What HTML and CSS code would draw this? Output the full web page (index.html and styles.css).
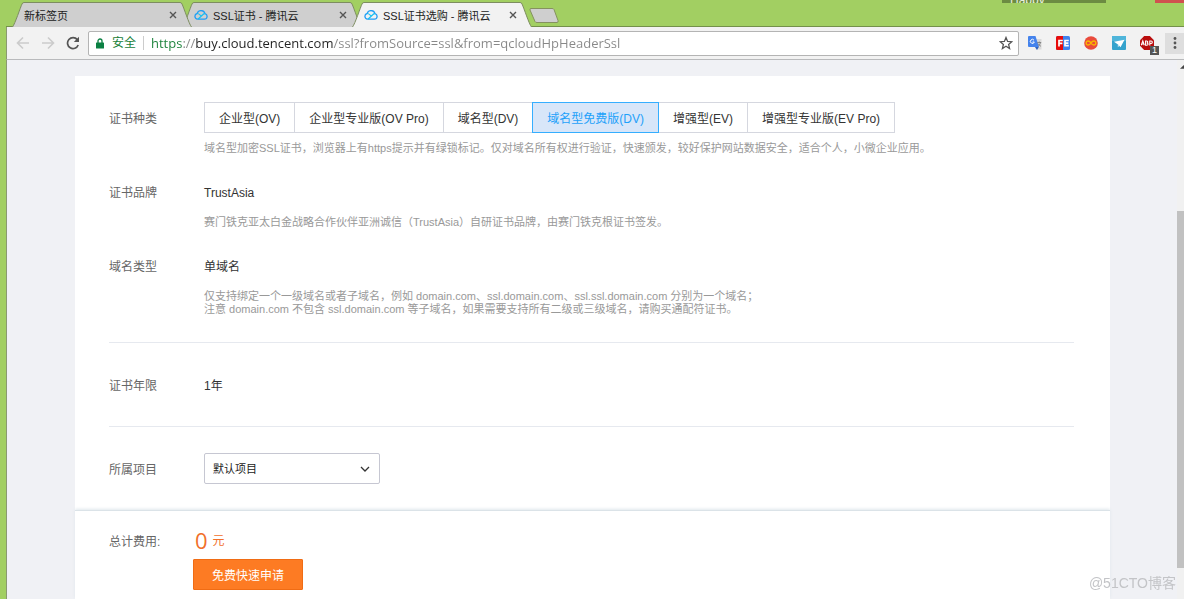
FILE: index.html
```html
<!DOCTYPE html>
<html lang="zh-CN">
<head>
<meta charset="utf-8">
<meta name="viewport" content="width=device-width, initial-scale=1">
<title>SSL证书选购 - 腾讯云</title>
<link rel="stylesheet" href="styles.css">
</head>
<body>
<svg class="sprites" aria-hidden="true">
  <symbol id="close" viewBox="0 0 8 8"><path d="M1 1l6 6M7 1L1 7" fill="none" stroke="#555" stroke-width="1.4"/></symbol>
  <symbol id="cloud" viewBox="0 0 14 10">
    <path d="M3.600 9.200H10.400a2.800 2.800 0 0 0 .6-5.500 4.100 4.100 0 0 0-7.900-.2A2.900 2.900 0 0 0 3.600 9.200" fill="none" stroke="#219df5" stroke-width="1.300"/>
    <path d="M4.200 9l4.800-4.500a2.300 2.300 0 0 1 2-.8M3.100 3.500c1.600-.2 2.600.8 3.900 2.300" fill="none" stroke="#14c1f2" stroke-width="1.200"/>
  </symbol>
  <symbol id="tab-shape" viewBox="0 0 180 25" preserveAspectRatio="none">
    <path d="M.5 25C3 22 8.500 5 10 2Q10.500.5 12 .5H168Q169.500.5 170 2C172 6 177 22 179.500 25" stroke="#7d8d60" stroke-width="1"/>
  </symbol>
</svg>

<div class="window">
  <header class="tabstrip">
    <nav class="tabs" aria-label="标签页">
      <div class="tab tab-first">
        <svg class="tab-bg"><use href="#tab-shape"/></svg>
        <button class="tab-title">新标签页</button>
        <button class="tab-close" aria-label="关闭"><svg><use href="#close"/></svg></button>
      </div>
      <div class="tab">
        <svg class="tab-bg"><use href="#tab-shape"/></svg>
        <svg class="tab-icon"><use href="#cloud"/></svg>
        <button class="tab-title">SSL证书 - 腾讯云</button>
        <button class="tab-close" aria-label="关闭"><svg><use href="#close"/></svg></button>
      </div>
      <div class="tab tab-active">
        <svg class="tab-bg"><use href="#tab-shape"/></svg>
        <svg class="tab-icon"><use href="#cloud"/></svg>
        <button class="tab-title">SSL证书选购 - 腾讯云</button>
        <button class="tab-close" aria-label="关闭"><svg><use href="#close"/></svg></button>
      </div>
      <button class="new-tab" aria-label="新建标签页"><svg viewBox="0 0 30 15"><path d="M2 .5H23q1.500 0 2 1L29 12.500q.6 2-1 2H8q-1.500 0-2-1L1 2Q.5.5 2 .5z" fill="#cfcfcf" stroke="#85925f"/></svg></button>
    </nav>
    <div class="user-badge">Happy</div>
    <button class="window-close" aria-label="关闭窗口"></button>
  </header>

  <div class="toolbar">
    <button class="nav-btn" aria-label="后退"><svg viewBox="0 0 14 14"><path d="M13 7H2M7 1.500L1.500 7L7 12.500" fill="none" stroke="#cbcbcb" stroke-width="1.600"/></svg></button>
    <button class="nav-btn" aria-label="前进"><svg viewBox="0 0 14 14"><path d="M1 7h11M7 1.500L12.500 7L7 12.500" fill="none" stroke="#cbcbcb" stroke-width="1.600"/></svg></button>
    <button class="nav-btn reload" aria-label="刷新"><svg viewBox="0 0 14 14"><path d="M12.200 9A5.500 5.500 0 1 1 11.300 3.600" fill="none" stroke="#555" stroke-width="1.700"/><path d="M13 .8V6H7.800z" fill="#555"/></svg></button>
    <div class="address">
      <svg class="lock" viewBox="0 0 8 11"><path d="M2 5V3a2 2 0 0 1 4 0v2" fill="none" stroke="#0b8043" stroke-width="1.300"/><rect y="4.500" width="8" height="6" rx=".6" fill="#0b8043"/></svg>
      <label class="secure" for="url">安全</label>
      <input class="url" id="url" type="text" spellcheck="false" value="https://buy.cloud.tencent.com/ssl?fromSource=ssl&amp;from=qcloudHpHeaderSsl">
      <button class="star" aria-label="收藏"><svg viewBox="0 0 14 14"><path d="M7 1.500l1.600 3.900 4.200.3-3.200 2.700 1 4.100L7 10.300l-3.600 2.200 1-4.100L1.200 5.700l4.200-.3z" fill="none" stroke="#555" stroke-width="1.300"/></svg></button>
    </div>
    <div class="extensions">
      <button class="ext" aria-label="翻译"><svg viewBox="0 0 14 14"><path d="M5 3h8.500v10.500H8z" fill="#dadada"/><path d="M0 1q0-1 1-1h6.500L11 11H1q-1 0-1-1z" fill="#4583ec"/><path d="M7 11h3.800L9 14z" fill="#3162bd"/><path d="M6 4.200A2 2 0 1 0 6.300 6H4.500" fill="none" stroke="#fff"/><path d="M9.200 6.500h4M11.300 5.500v1M12.500 6.500Q12 9 10.300 10M10 7.500q1 2 3 2.800" fill="none" stroke="#777" stroke-width=".8"/></svg></button>
      <button class="ext" aria-label="FE助手"><svg viewBox="0 0 14 14"><rect width="14" height="14" rx="1.500" fill="#3f83ee"/><path d="M1.500 0H7v14H1.500Q0 14 0 12.500v-11Q0 0 1.500 0z" fill="#e80b0b"/><path d="M3 10.500V4.500h3.800M3 7.300h3.400M12.800 4.500H9v5.200h3.800M9 7.100h3.400" fill="none" stroke="#fff" stroke-width="1.700"/></svg></button>
      <button class="ext" aria-label="无限"><svg viewBox="0 0 14 14"><circle cx="7" cy="7" r="6.800" fill="#e94b3c"/><path d="M7 7C5.500 4.500 2.200 4.300 2.200 7S5.500 9.500 7 7s4.800-2.700 4.800 0S8.500 9.500 7 7z" fill="none" stroke="#f8b500" stroke-width="1.400"/></svg></button>
      <button class="ext" aria-label="发送"><svg viewBox="0 0 14 14"><rect width="14" height="14" rx="1" fill="#35a3cd"/><path d="M0 0h14v5H0z" fill="#4fb5da"/><path d="M2 5.800L12.500 3.800 8.500 11.200 6 8.600z" fill="#fff"/><path d="M5.800 8.400v2.800l1.500-1.400z" fill="#cfe9f4"/></svg></button>
      <button class="ext" aria-label="ABP"><svg viewBox="0 0 14 14"><path d="M4.200 0h5.600L14 4.200v5.600L9.800 14H4.200L0 9.800V4.200z" fill="#b90d0d"/><path d="M1.300 9.300L2.800 4.900l1.500 4.400M1.800 8h2M5.600 5v4.200h1.200q1.300 0 1.300-1.200 0-1-1.300-1 1 0 1-1t-1-1zM9.800 9.500V5h1.300q1.200 0 1.200 1.200t-1.200 1.300H9.800" fill="none" stroke="#fff" stroke-width="1.100"/></svg><span class="count">1</span></button>
    </div>
    <button class="menu" aria-label="菜单"><svg viewBox="0 0 4 14"><circle cx="2" cy="2.500" r="1.400" fill="#555"/><circle cx="2" cy="7" r="1.400" fill="#555"/><circle cx="2" cy="11.500" r="1.400" fill="#555"/></svg></button>
  </div>

  <div class="viewport">
    <main class="page">
      <form class="order">
        <section class="group">
          <div class="row">
            <span class="label">证书种类</span>
            <div class="field">
              <div class="types">
                <button type="button" class="type">企业型(OV)</button>
                <button type="button" class="type">企业型专业版(OV Pro)</button>
                <button type="button" class="type">域名型(DV)</button>
                <button type="button" class="type type-active">域名型免费版(DV)</button>
                <button type="button" class="type">增强型(EV)</button>
                <button type="button" class="type">增强型专业版(EV Pro)</button>
              </div>
              <p class="hint">域名型加密SSL证书，浏览器上有https提示并有绿锁标记。仅对域名所有权进行验证，快速颁发，较好保护网站数据安全，适合个人，小微企业应用。</p>
            </div>
          </div>
          <div class="row">
            <span class="label">证书品牌</span>
            <div class="field">
              <div class="value">TrustAsia</div>
              <p class="hint">赛门铁克亚太白金战略合作伙伴亚洲诚信（TrustAsia）自研证书品牌，由赛门铁克根证书签发。</p>
            </div>
          </div>
          <div class="row">
            <span class="label">域名类型</span>
            <div class="field">
              <div class="value">单域名</div>
              <p class="hint">仅支持绑定一个一级域名或者子域名，例如 domain.com、ssl.domain.com、ssl.ssl.domain.com 分别为一个域名；<br>注意 domain.com 不包含 ssl.domain.com 等子域名，如果需要支持所有二级或三级域名，请购买通配符证书。</p>
            </div>
          </div>
        </section>
        <section class="group">
          <div class="row">
            <span class="label">证书年限</span>
            <div class="value">1年</div>
          </div>
        </section>
        <section class="group">
          <div class="row">
            <label class="label" for="project">所属项目</label>
            <div class="select">
              <select id="project"><option>默认项目</option></select>
              <svg class="chevron" viewBox="0 0 10 6"><path d="M1 1l4 4 4-4" fill="none" stroke="#333" stroke-width="1.300"/></svg>
            </div>
          </div>
        </section>
      </form>
      <section class="checkout">
        <span class="label">总计费用:</span>
        <div class="total">
          <div class="price"><strong class="amount">0</strong><span>元</span></div>
          <button class="apply">免费快速申请</button>
        </div>
      </section>
    </main>
    <div class="scrollbar">
      <svg class="scroll-up" viewBox="0 0 7 5"><path d="M0 5L5 0h2v5z" fill="#444"/></svg>
      <div class="thumb"></div>
    </div>
  </div>
</div>
<div class="watermark">@51CTO博客</div>
</body>
</html>
```
FILE: styles.css
```css
* {
  box-sizing: border-box;
}

body {
  margin: 0;
  background: #a2cf62;
  color: #333;
  font: 12px "Liberation Sans", "Noto Sans CJK SC", sans-serif;
}

button {
  margin: 0;
  padding: 0;
  border: 0;
  background: none;
  color: inherit;
  font: inherit;
}

svg {
  display: block;
}

.sprites {
  position: absolute;
  width: 0;
  height: 0;
}

.window {
  display: flex;
  flex-direction: column;
  height: 100vh;
  min-width: 960px;
  padding-left: 6px;
  overflow: hidden;
}

/* Tab strip */
.tabstrip {
  display: flex;
  flex: none;
  align-items: flex-start;
  height: 27px;
  border-bottom: 1px solid #73904a;
}

.tabs {
  display: flex;
  flex: 1;
  padding: 2px 0 0 6px;
}

.tab {
  position: relative;
  display: flex;
  align-items: center;
  width: 180px;
  height: 25px;
  margin-right: -10px;
  padding: 0 15px 0 12px;
  fill: #cfcfcf;
}

.tab-first {
  z-index: 1;
}

.tab-active {
  z-index: 2;
  fill: #f2f2f2;
}

.tab-bg {
  position: absolute;
  inset: 0;
  width: 100%;
  height: 100%;
}

.tab-icon,
.tab-title,
.tab-close {
  position: relative;
}

.tab-icon {
  width: 14px;
  height: 10px;
  margin-right: 5px;
}

.tab-title {
  flex: 1;
  font-size: 11px;
  text-align: left;
  white-space: nowrap;
  color: #222;
}

.tab-close svg {
  width: 8px;
  height: 8px;
}

.new-tab {
  width: 30px;
  margin: 6px 0 0 7px;
  align-self: flex-start;
}

.user-badge {
  width: 104px;
  height: 3px;
  margin-right: 49px;
  padding-left: 8px;
  overflow: hidden;
  background: #6c8b42;
  color: #e8f0dc;
  line-height: 0;
}

.window-close {
  width: 29px;
  height: 3px;
  background: #d0514f;
}

/* Toolbar */
.toolbar {
  display: flex;
  flex: none;
  align-items: center;
  height: 33px;
  padding-left: 9px;
  border-left: 1px solid #8a9a70;
  border-bottom: 1px solid #b9babc;
  background: #f2f2f2;
}

.nav-btn {
  width: 14px;
  margin-right: 11px;
}

.reload {
  margin-right: 8px;
}

.address {
  display: flex;
  flex: 1;
  align-items: center;
  height: 25px;
  padding: 0 5px 0 7px;
  border: 1px solid #b4b4b4;
  border-radius: 2px;
  background: #fff;
}

.lock {
  width: 8px;
  height: 11px;
}

.secure {
  margin-left: 8px;
  padding-right: 7px;
  border-right: 1px solid #ccc;
  color: #188038;
  line-height: 14px;
}

.url {
  flex: 1;
  min-width: 0;
  height: 22px;
  margin-left: 7px;
  padding: 0;
  border: 0;
  outline: 0;
  background: linear-gradient(90deg, #188038 32px, #888 32px 44px, #222 44px 182px, #888 182px);
  background-clip: text;
  -webkit-background-clip: text;
  -webkit-text-fill-color: transparent;
  font: 13px "Open Sans", "Noto Sans", sans-serif;
}

.star {
  width: 14px;
}

.extensions {
  display: flex;
  gap: 14px;
  margin: 0 11px 0 9px;
}

.ext {
  position: relative;
  width: 14px;
}

.count {
  position: absolute;
  left: 10px;
  top: 10px;
  width: 9px;
  height: 9px;
  background: #555;
  color: #fff;
  font-size: 9px;
  line-height: 9px;
}

.menu {
  display: flex;
  align-items: center;
  justify-content: center;
  width: 19px;
  height: 21px;
  background: #dedede;
}

.menu svg {
  width: 4px;
}

/* Page */
.viewport {
  display: flex;
  flex: 1;
  min-height: 0;
  border-left: 1px solid #8a9a70;
  background: #f0f1f5;
}

.page {
  flex: 1;
  min-width: 0;
  display: flex;
  flex-direction: column;
  padding: 16px 67px 0 68px;
}

.order {
  padding: 0 36px 0 34px;
  background: #fff;
}

.group {
  display: grid;
  gap: 21px;
  padding: 26px 0;
}

.group + .group {
  border-top: 1px solid #e6e9ef;
}

.row,
.checkout {
  display: grid;
  grid-template-columns: 95px 1fr;
}

.label,
.value {
  margin-bottom: -3px;
  line-height: 34px;
}

.label {
  color: #666;
}

.types {
  display: flex;
}

.type {
  height: 31px;
  padding: 0 14px;
  border: 1px solid #d5d7df;
  white-space: nowrap;
}

.type + .type {
  margin-left: -1px;
}

.type-active {
  position: relative;
  border-color: #35aeff;
  background: #d8e6f9;
  color: #1ea1fa;
}

.hint {
  margin: 9px 0 0;
  color: #999;
  font-size: 11px;
  line-height: 13px;
  white-space: nowrap;
}

.select {
  position: relative;
  width: 176px;
}

.select select {
  width: 100%;
  height: 31px;
  padding: 0 8px;
  border: 1px solid #c6c7d2;
  border-radius: 2px;
  appearance: none;
  background: #fff;
  color: #222;
  font: inherit;
  font-size: 11px;
}

.chevron {
  position: absolute;
  right: 10px;
  top: 13px;
  width: 10px;
  pointer-events: none;
}

.checkout {
  grid-template-columns: 84px 1fr;
  flex: 1;
  align-content: start;
  padding: 14px 34px 0;
  border-top: 1px solid #dbe3e8;
  background: #fff;
  box-shadow: 0 -1px 3px #dfe7ec;
}

.price {
  display: flex;
  align-items: center;
  gap: 5px;
  height: 29px;
  padding-left: 2px;
  color: #f1702b;
}

.amount {
  font: 22px "Open Sans", "Noto Sans", sans-serif;
}

.apply {
  height: 31px;
  margin-top: 5px;
  padding: 0 18px;
  border: 1px solid #f06c14;
  border-radius: 1px;
  background: #fd7b23;
  color: #fff;
}

.scrollbar {
  width: 7px;
  background: #f1f1f1;
}

.scroll-up {
  width: 5px;
  height: 4px;
  margin: 5px 0 0 3px;
}

.thumb {
  height: 357px;
  margin-top: 142px;
  background: #c1c1c1;
}

.watermark {
  position: fixed;
  right: 8px;
  bottom: 7px;
  color: #c3c4c7;
  font-size: 14px;
  line-height: 18px;
}
```
